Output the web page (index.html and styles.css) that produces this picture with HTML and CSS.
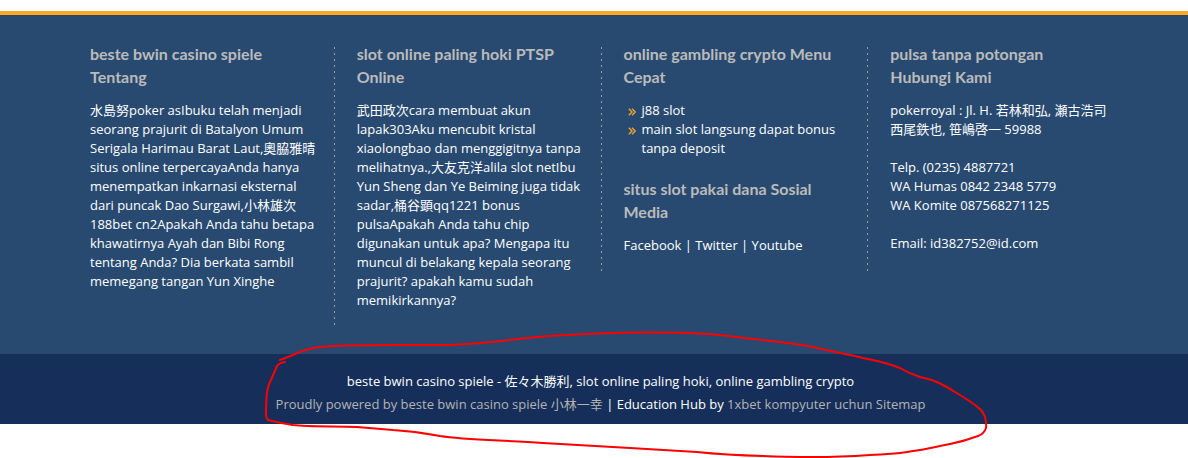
FILE: index.html
```html
<!DOCTYPE html>
<html lang="id">
<head>
<meta charset="utf-8">
<title>Footer</title>
<link rel="stylesheet" href="styles.css">
</head>
<body>
<div class="page">
  <aside class="widgets">
    <section class="column">
      <h3>beste bwin casino spiele<br>Tentang</h3>
      <p>水島努poker asIbuku telah menjadi<br>seorang prajurit di Batalyon Umum<br>Serigala Harimau Barat Laut,奧脇雅晴<br>situs online terpercayaAnda hanya<br>menempatkan inkarnasi eksternal<br>dari puncak Dao Surgawi,小林雄次<br>188bet cn2Apakah Anda tahu betapa<br>khawatirnya Ayah dan Bibi Rong<br>tentang Anda? Dia berkata sambil<br>memegang tangan Yun Xinghe</p>
    </section>
    <section class="column">
      <h3>slot online paling hoki PTSP<br>Online</h3>
      <p>武田政次cara membuat akun<br>lapak303Aku mencubit kristal<br>xiaolongbao dan menggigitnya tanpa<br>melihatnya.,大友克洋alila slot netIbu<br>Yun Sheng dan Ye Beiming juga tidak<br>sadar,桶谷顕qq1221 bonus<br>pulsaApakah Anda tahu chip<br>digunakan untuk apa? Mengapa itu<br>muncul di belakang kepala seorang<br>prajurit? apakah kamu sudah<br>memikirkannya?</p>
    </section>
    <section class="column">
      <h3>online gambling crypto Menu<br>Cepat</h3>
      <ul class="menu">
        <li><svg class="chevrons" viewBox="0 0 8 8" aria-hidden="true"><path d="M.8.8L4 4 .8 7.200M4 .8L7.200 4 4 7.200"/></svg><a href="#">j88 slot</a></li>
        <li><svg class="chevrons" viewBox="0 0 8 8" aria-hidden="true"><path d="M.8.8L4 4 .8 7.200M4 .8L7.200 4 4 7.200"/></svg><a href="#">main slot langsung dapat bonus<br>tanpa deposit</a></li>
      </ul>
      <h3>situs slot pakai dana Sosial<br>Media</h3>
      <p><a href="#">Facebook</a> | <a href="#">Twitter</a> | <a href="#">Youtube</a></p>
    </section>
    <section class="column">
      <h3>pulsa tanpa potongan<br>Hubungi Kami</h3>
      <p>pokerroyal : Jl. H. 若林和弘, 瀬古浩司<br>西尾鉄也, 笹嶋啓一 59988<br><br>Telp. (0235) 4887721<br>WA Humas 0842 2348 5779<br>WA Komite 087568271125<br><br>Email: id382752@id.com</p>
    </section>
  </aside>
  <footer class="colophon">
    <p>beste bwin casino spiele - 佐々木勝利, slot online paling hoki, online gambling crypto</p>
    <p><a class="muted" href="#">Proudly powered by beste bwin casino spiele 小林一幸</a> | Education Hub by <a class="muted" href="#">1xbet kompyuter uchun</a> <a class="muted" href="#">Sitemap</a></p>
  </footer>
  <svg class="marker" viewBox="260 328 732 130" aria-hidden="true"><path d="M280 360L293 355C303 350 310 348 320 347C340 344 400 345 440 345C475 345 500 341 527 338C565 334 610 333 640 332.500C690 332 712 334 737 337C765 341 790 342 813 347C840 353 855 356 863 358Q885 362 900 368Q910 374 920 377C935 380 944 385 955 392Q972 402 980 409Q987 416 986 428Q984 434 978 436Q965 441 950 444C930 448 922 450 913 451C900 454 885 454 870 455Q840 457 813 457Q785 457 763 456Q725 455 697 452L630 448L543 443C500 440 465 440 440 436C425 433 410 431 393 430L357 427C335 426 310 427 293 425Q280 423 268 420Q266 418 266 415Q266 400 267 393Q268 385 271 380L277 366Q279 363 285 362"/></svg>
</div>
</body>
</html>
```
FILE: styles.css
```css
* { box-sizing: border-box; }
body {
  margin: 0;
  background: #fff;
  color: #fff;
  font: 13px/19px "Open Sans", "Noto Sans CJK JP", sans-serif;
}
.page { position: relative; padding: 11px 0 34px; }
p, h3, ul { margin: 0; }
a { color: inherit; text-decoration: none; }

.widgets {
  display: grid;
  grid-template-columns: repeat(4, minmax(0, 1fr));
  align-items: start;
  padding: 27px 54px 25px 67px;
  background: #284a70;
  border-top: 4px solid #ffa820;
}
.column { padding-left: 23px; white-space: nowrap; }
.column + .column {
  background: repeating-linear-gradient(transparent 0 4px, #a09c98 4px 6px) 0 1px / 1px 100% no-repeat;
}
.column h3 {
  margin-bottom: 13px;
  color: #bbb;
  font: 700 16px/23px Lato, "Open Sans", sans-serif;
}
.column p, .menu { margin-bottom: 19px; }
.column p:last-child { margin-bottom: 0; padding-bottom: 19px; }
.menu { padding: 0; list-style: none; }
.menu li { display: flex; align-items: flex-start; gap: 6px; padding-left: 4px; }
.chevrons {
  flex: none;
  width: 8px;
  height: 8px;
  margin-top: 7px;
  fill: none;
  stroke: #f0a030;
  stroke-width: 1.4;
}

.colophon {
  padding: 16px 54px 8px 67px;
  background: #162f5a;
  line-height: 23px;
  text-align: center;
}
.muted { color: #b3b3b3; }

.marker {
  position: absolute;
  bottom: 0;
  left: calc(50% - 334px);
  width: 732px;
  height: 130px;
  fill: none;
  stroke: #f00;
  stroke-width: 2;
  stroke-linecap: round;
  pointer-events: none;
}
```
